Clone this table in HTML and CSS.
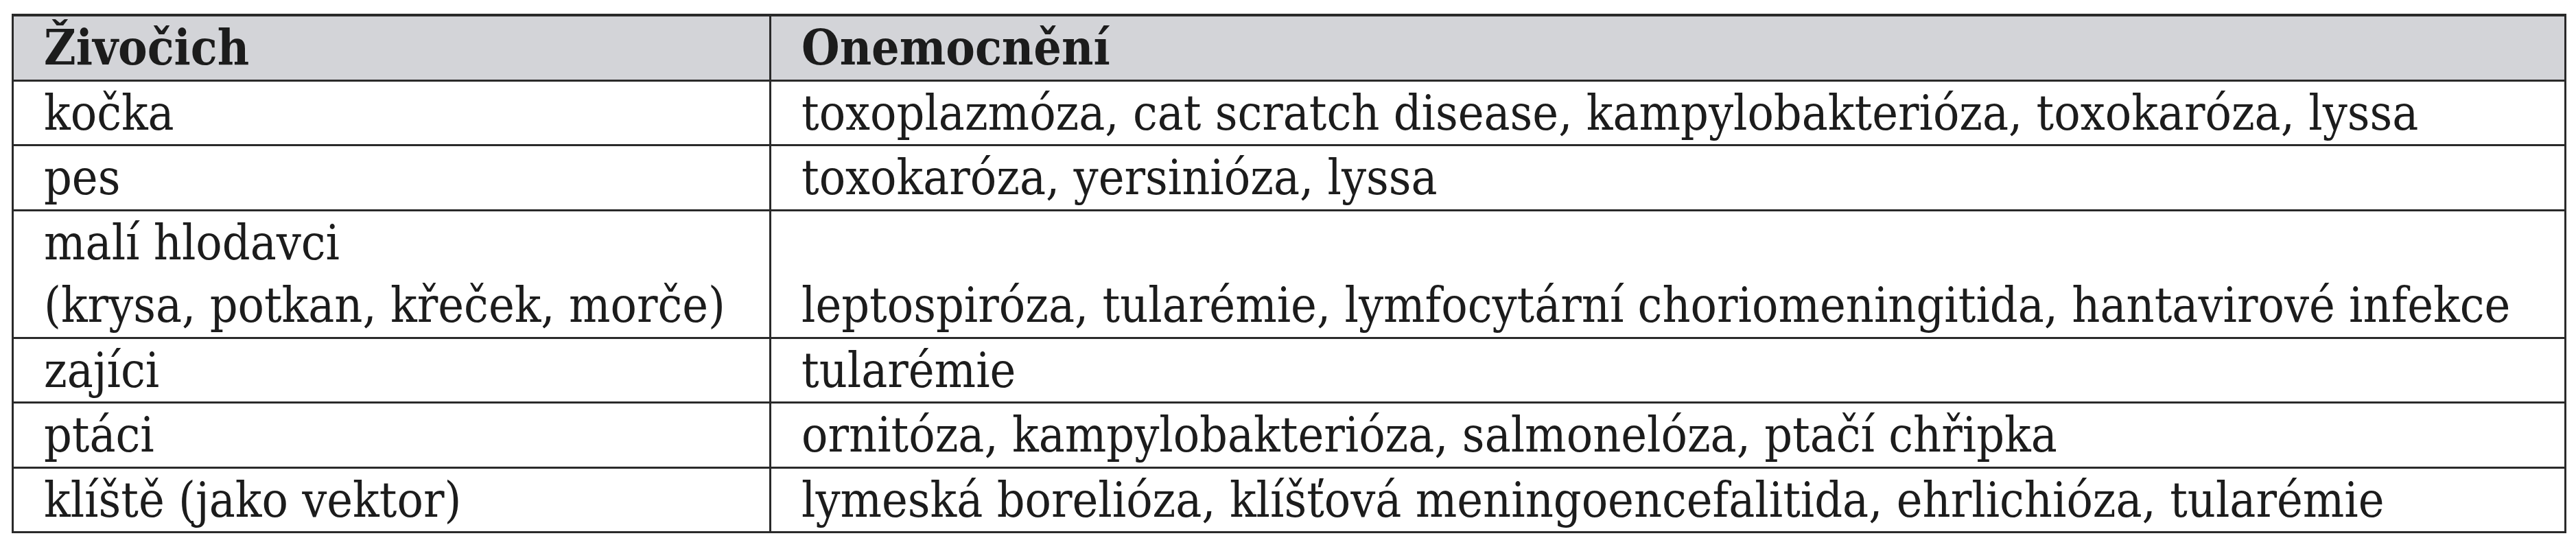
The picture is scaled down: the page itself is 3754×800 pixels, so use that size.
FILE: index.html
```html
<!DOCTYPE html>
<html lang="cs">
<head>
<meta charset="utf-8">
<title>Živočich – Onemocnění</title>
<link rel="stylesheet" href="styles.css">
</head>
<body>
<table class="zoo">
  <colgroup><col class="c-animal"><col class="c-disease"></colgroup>
  <thead>
    <tr><th>Živočich</th><th>Onemocnění</th></tr>
  </thead>
  <tbody>
    <tr><td>kočka</td><td>toxoplazmóza, cat scratch disease, kampylobakterióza, toxokaróza, lyssa</td></tr>
    <tr><td>pes</td><td>toxokaróza, yersinióza, lyssa</td></tr>
    <tr><td>malí hlodavci<br>(krysa, potkan, křeček, morče)</td><td>leptospiróza, tularémie, lymfocytární choriomeningitida, hantavirové infekce</td></tr>
    <tr><td>zajíci</td><td>tularémie</td></tr>
    <tr><td>ptáci</td><td>ornitóza, kampylobakterióza, salmonelóza, ptačí chřipka</td></tr>
    <tr><td>klíště (jako vektor)</td><td>lymeská borelióza, klíšťová meningoencefalitida, ehrlichióza, tularémie</td></tr>
  </tbody>
</table>
</body>
</html>
```
FILE: styles.css
```css
html, body {
  margin: 0;
  background: #ffffff;
}
body {
  padding: 20px 17px;
}
.zoo {
  border-collapse: collapse;
  width: 3720px;
  table-layout: fixed;
  font-family: "DejaVu Serif", "Liberation Serif", serif;
  font-stretch: condensed;
  font-size: 71px;
  line-height: 91.5px;
  color: #1c1c1c;
}
.c-animal { width: 1104px; }
.c-disease { width: 2616px; }
.zoo th,
.zoo td {
  border: 3px solid #2a2a2a;
  padding: 0 0 0 44px;
  text-align: left;
  vertical-align: bottom;
  white-space: nowrap;
}
.zoo th {
  background: #d3d4d8;
  font-weight: bold;
}
.zoo thead tr th {
  border-top-width: 4px;
}
```
